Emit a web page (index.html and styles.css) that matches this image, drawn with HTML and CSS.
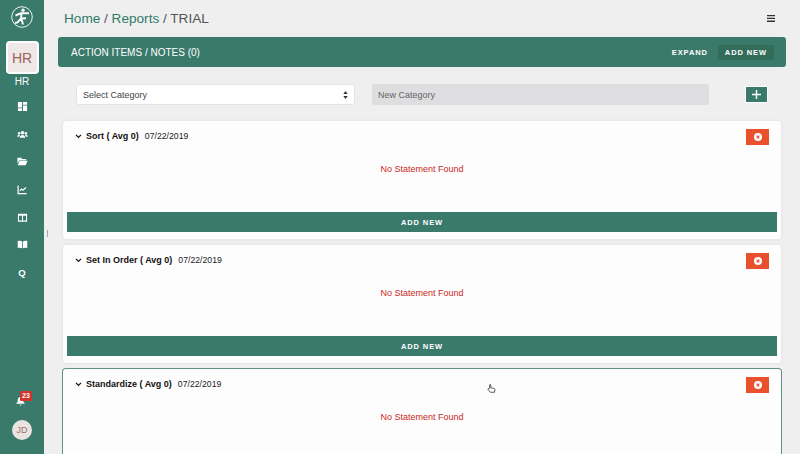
FILE: index.html
```html
<!DOCTYPE html>
<html lang="en">
<head>
<meta charset="utf-8">
<title>Reports</title>
<link rel="stylesheet" href="styles.css">
</head>
<body>
<div class="app">
  <aside class="sidebar">
    <div class="logo">
      <svg viewBox="0 0 24 24" width="24" height="24"><circle cx="12" cy="12" r="10.300" fill="none" stroke="#fff" stroke-width=".9"/><circle cx="13" cy="5.200" r="1.700" fill="#fff"/><path d="M5.500 10.500l5.500-2.300h8M11.500 8.500l-.5 5-3.500 4-2.500.5M11 13.500l5-.3M11.500 14l1.500 5.500" fill="none" stroke="#fff" stroke-width="1.900"/></svg>
    </div>
    <div class="hr-tile">HR</div>
    <div class="hr-label">HR</div>
    <nav class="nav">
      <svg class="ico" viewBox="0 0 12 12"><path d="M1 1h4.500v6H1zM6.500 1H11v3H6.500zM6.500 5H11v6H6.500zM1 8h4.500v3H1z" fill="#fff"/></svg>
      <svg class="ico" viewBox="0 0 12 12"><circle cx="6" cy="4" r="1.900" fill="#fff"/><circle cx="2.300" cy="4.500" r="1.300" fill="#fff"/><circle cx="9.700" cy="4.500" r="1.300" fill="#fff"/><path d="M3 9.500c0-4 6-4 6 0zM0.300 8.500c0-2.500 2-2.800 3-2.300L2.300 8.500zM11.700 8.500c0-2.500-2-2.800-3-2.300l1 2.300z" fill="#fff"/></svg>
      <svg class="ico" viewBox="0 0 12 12"><path d="M0.500 2h4l1 1.200H10v1.300H2.800L0.500 8.500zM3 5.300h8.500L9.500 10H0.800z" fill="#fff"/></svg>
      <svg class="ico" viewBox="0 0 12 12"><path d="M1.200 1.500v9h9.300" fill="none" stroke="#fff" stroke-width="1.300"/><path d="M3 7.500l2-2 1.500 1.200L9.800 3.800" fill="none" stroke="#fff" stroke-width="1.300"/></svg>
      <svg class="ico" viewBox="0 0 12 12"><path d="M1 2h10v8.500H1zM2.200 4.200v5h3.200v-5zM6.600 4.200v5h3.200v-5z" fill="#fff" fill-rule="evenodd"/></svg>
      <svg class="ico" viewBox="0 0 12 12"><path d="M0.800 2.300c2-.6 4-.4 4.800.6v7.300c-1-.8-3-1-4.800-.5zM11.200 2.300c-2-.6-4-.4-4.800.6v7.300c1-.8 3-1 4.800-.5z" fill="#fff"/></svg>
      <span class="q">Q</span>
    </nav>
    <div class="side-foot">
      <div class="bell">
        <svg viewBox="0 0 12 12" width="11" height="11"><path d="M6 1c-2.500 0-3 2-3 4 0 2-1 2.500-1.800 3.500h9.600C10 7.500 9 7 9 5c0-2-.5-4-3-4zM5 9.500h2L6 11z" fill="#fff"/></svg>
        <span class="badge">23</span>
      </div>
      <div class="avatar">JD</div>
    </div>
  </aside>
  <div class="grip"></div>
  <main class="main">
    <header class="topbar">
      <div class="crumbs"><span class="crumb-link">Home</span> / <span class="crumb-link">Reports</span> / TRIAL</div>
      <svg class="burger" viewBox="0 0 8 7" width="8" height="7"><path d="M0 0h8v1.300H0zM0 2.800h8v1.300H0zM0 5.600h8v1.300H0z" fill="#333"/></svg>
    </header>
    <section class="band">
      <h1 class="band-title">ACTION ITEMS / NOTES (0)</h1>
      <div class="band-actions">
        <span class="band-btn">EXPAND</span>
        <span class="band-btn band-btn-dark">ADD NEW</span>
      </div>
    </section>
    <div class="filters">
      <div class="select"><span>Select Category</span>
        <svg viewBox="0 0 6 10" width="5" height="8"><path d="M3 0l2.700 3.600H.3zM3 10L.3 6.400h5.400z" fill="#333"/></svg>
      </div>
      <div class="new-cat">New Category</div>
      <button class="plus">
        <svg viewBox="0 0 10 10" width="9" height="9"><path d="M4.200 0h1.600v4.200H10v1.600H5.800V10H4.200V5.800H0V4.200h4.200z" fill="#fff"/></svg>
      </button>
    </div>
    <div class="cards">
      <article class="card">
        <div class="card-head">
          <svg class="chev" viewBox="0 0 8 6" width="7" height="5"><path d="M1 1l3 3 3-3" fill="none" stroke="#111" stroke-width="1.500"/></svg>
          <strong class="title">Sort ( Avg 0)</strong><span class="date">07/22/2019</span>
          <button class="del"><svg viewBox="0 0 10 10" width="8" height="8"><circle cx="5" cy="5" r="5" fill="#fff"/><path d="M3.300 3.300l3.400 3.400M6.700 3.300L3.300 6.700" stroke="#e8502e" stroke-width="1.300"/></svg></button>
        </div>
        <p class="empty">No Statement Found</p>
        <div class="add">ADD NEW</div>
      </article>
      <article class="card">
        <div class="card-head">
          <svg class="chev" viewBox="0 0 8 6" width="7" height="5"><path d="M1 1l3 3 3-3" fill="none" stroke="#111" stroke-width="1.500"/></svg>
          <strong class="title">Set In Order ( Avg 0)</strong><span class="date">07/22/2019</span>
          <button class="del"><svg viewBox="0 0 10 10" width="8" height="8"><circle cx="5" cy="5" r="5" fill="#fff"/><path d="M3.300 3.300l3.400 3.400M6.700 3.300L3.300 6.700" stroke="#e8502e" stroke-width="1.300"/></svg></button>
        </div>
        <p class="empty">No Statement Found</p>
        <div class="add">ADD NEW</div>
      </article>
      <article class="card card-active">
        <div class="card-head">
          <svg class="chev" viewBox="0 0 8 6" width="7" height="5"><path d="M1 1l3 3 3-3" fill="none" stroke="#111" stroke-width="1.500"/></svg>
          <strong class="title">Standardize ( Avg 0)</strong><span class="date">07/22/2019</span>
          <button class="del"><svg viewBox="0 0 10 10" width="8" height="8"><circle cx="5" cy="5" r="5" fill="#fff"/><path d="M3.300 3.300l3.400 3.400M6.700 3.300L3.300 6.700" stroke="#e8502e" stroke-width="1.300"/></svg></button>
        </div>
        <p class="empty">No Statement Found</p>
        <svg class="cursor" viewBox="0 0 12 14" width="9" height="11"><path d="M3.500 7V2.500c0-1.200 1.600-1.200 1.600 0V6l4 .8c1.200.3 1.600 1 1.400 2.200L10 12H4.500L1.500 8.500c-.6-1 .6-2 1.500-1z" fill="#fff" stroke="#222" stroke-width="1"/></svg>
      </article>
    </div>
  </main>
</div>
</body>
</html>
```
FILE: styles.css
```css
* { box-sizing: border-box; }
html, body { margin: 0; height: 454px; overflow: hidden; }
body { font-family: "Liberation Sans", Arial, sans-serif; background: #efeff0; color: #222; }
.app { display: flex; height: 454px; overflow: hidden; }

.sidebar { width: 44px; flex: none; height: 454px; background: #3a7a6b; display: flex; flex-direction: column; align-items: center; padding-top: 5px; }
.logo { height: 24px; width: 24px; margin-bottom: 12px; }
.logo svg { display: block; }
.hr-tile { width: 33px; height: 33px; background: #eee8e8; border: 2px solid #fff; border-radius: 4px; color: #a0625c; font-size: 14px; display: flex; align-items: center; justify-content: center; }
.hr-label { color: #fff; font-size: 10px; line-height: 12px; margin-top: 2px; }
.nav { display: flex; flex-direction: column; align-items: center; gap: 16.700px; margin-top: 13px; }
.ico { width: 11px; height: 11px; display: block; }
.q { color: #fff; font-size: 9.500px; line-height: 11px; font-weight: 700; font-family: "Liberation Sans", sans-serif; height: 11px; }
.side-foot { margin-top: auto; display: flex; flex-direction: column; align-items: center; padding-bottom: 14px; }
.bell { position: relative; height: 14px; width: 14px; display: flex; align-items: flex-end; margin-bottom: 13px; }
.badge { position: absolute; left: 5px; top: -2px; width: 12px; height: 10px; background: #d0342c; color: #fff; font-size: 7px; font-weight: 700; line-height: 10px; text-align: center; border-radius: 1px; }
.avatar { width: 20px; height: 20px; border-radius: 50%; background: #e9e4e2; color: #a0706a; font-size: 9px; display: flex; align-items: center; justify-content: center; }

.grip { width: 1px; height: 7px; background: #8fb5ab; flex: none; align-self: flex-start; margin: 230px 0 0 3px; }

.main { flex: 1; min-width: 0; padding-left: 10px; padding-right: 14px; }
.topbar { height: 37px; display: flex; align-items: center; justify-content: space-between; padding-left: 6px; padding-right: 11px; }
.crumbs { font-size: 13.600px; color: #555; }
.crumb-link { color: #2f7a68; }
.burger { display: block; }
.band { height: 30px; background: #3a7a6b; border-radius: 3px; display: flex; align-items: center; justify-content: space-between; padding: 0 12px 0 13px; color: #fff; }
.band-title { margin: 0; font-size: 10px; font-weight: 400; }
.band-actions { display: flex; align-items: center; gap: 10px; }
.band-btn { font-size: 7.500px; font-weight: 700; letter-spacing: .9px; padding: 3px 0; }
.band-btn-dark { background: #336d5a; padding: 3px 7px; border-radius: 1px; }

.filters { display: flex; align-items: center; height: 21px; margin-top: 17px; padding-left: 18px; }
.select { width: 279px; height: 21px; background: #fff; border: 1px solid #e3e3e3; border-radius: 3px; display: flex; align-items: center; justify-content: space-between; padding: 0 6px; font-size: 9px; color: #444; }
.new-cat { width: 337px; height: 21px; margin-left: 17px; background: #dedde0; border-radius: 3px; padding: 0 6px; font-size: 9px; line-height: 23px; color: #666; }
.plus { width: 23px; height: 17px; margin-left: 36px; padding: 0; background: #3a7a6b; border: 1px solid #fff; display: flex; align-items: center; justify-content: center; }

.cards { margin-top: 16px; padding-left: 5px; padding-right: 5px; display: flex; flex-direction: column; gap: 6px; }
.card { position: relative; flex: none; height: 118px; background: #fefdfe; border-radius: 3px; box-shadow: 0 0 3px #dcdcdc; padding: 8px 4px 7px; display: flex; flex-direction: column; }
.card-active { box-shadow: 0 0 0 1px #5f9384; }
.card-head { display: flex; align-items: center; height: 16px; font-size: 9px; color: #222; padding-left: 8px; padding-right: 8px; }
.title, .date { position: relative; top: -1.500px; }
.card-head strong { margin-left: 4px; color: #111; }
.chev { display: block; position: relative; top: -1px; }
.date { margin-left: 6px; font-size: 8.700px; }
.del { margin-left: auto; width: 23px; height: 16px; padding: 0; border: 0; background: #e8502e; display: flex; align-items: center; justify-content: center; }
.empty { margin: 0; flex: 1; padding-top: 17px; text-align: center; font-size: 9px; line-height: 14px; color: #c9281c; }
.add { height: 20px; background: #3a7a6b; color: #fff; text-align: center; font-size: 7.500px; font-weight: 700; letter-spacing: .9px; line-height: 21px; }
.cursor { position: absolute; left: 424px; top: 14px; }
```
